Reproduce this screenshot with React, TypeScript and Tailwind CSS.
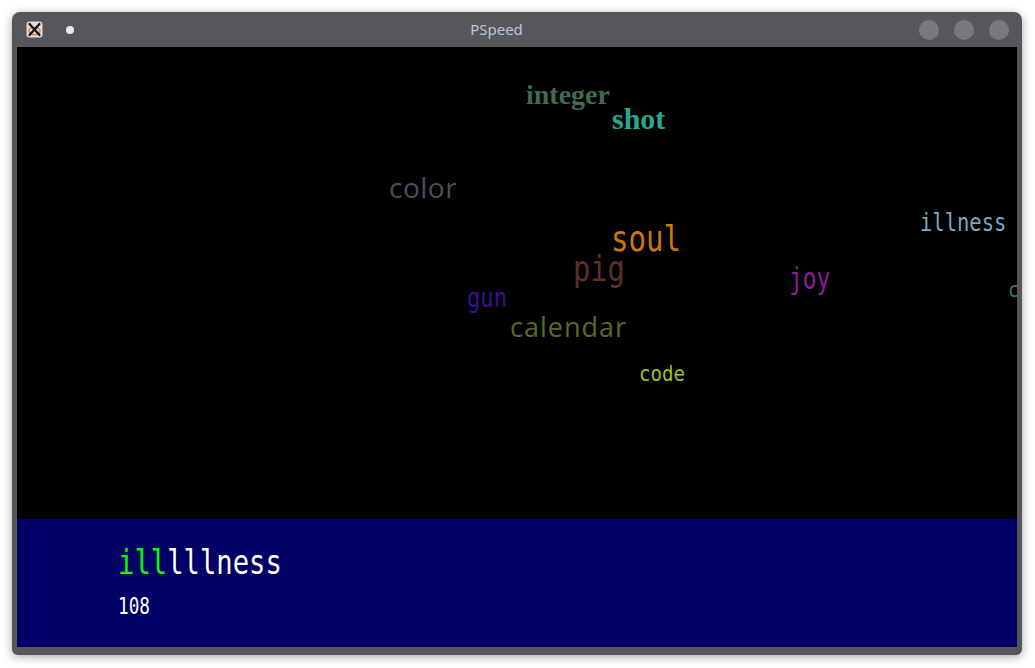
import React from 'react';

type Word = {
  text: string;
  left: number;
  top: number;
  cls: string;
};

// falling words on the play field (position is the content)
const words: Word[] = [
  { text: 'integer', left: 509, top: 34, cls: "font-['Liberation_Serif',serif] font-bold text-[28px] text-[#3f6c50]" },
  { text: 'shot', left: 595, top: 57, cls: "font-['Liberation_Serif',serif] font-bold text-[30px] text-[#28a98d]" },
  { text: 'color', left: 372, top: 126, cls: "font-['Open_Sans',sans-serif] text-[28px] tracking-[0.5px] text-[#594661]" },
  { text: 'soul', left: 594, top: 175, cls: "font-['DejaVu_Sans_Mono',monospace] text-[35px] scale-x-[0.83] text-[#c97a0c]" },
  { text: 'pig', left: 556, top: 205, cls: "font-['DejaVu_Sans_Mono',monospace] text-[35px] scale-x-[0.82] text-[#5c3129]" },
  { text: 'gun', left: 450, top: 237, cls: "font-['DejaVu_Sans_Mono',monospace] text-[27px] scale-x-[0.82] text-[#3b0f92]" },
  { text: 'calendar', left: 493, top: 266, cls: "font-['Open_Sans',sans-serif] text-[27px] tracking-[1px] text-[#5b6a22]" },
  { text: 'code', left: 622, top: 316, cls: "font-['DejaVu_Sans_Mono',monospace] text-[22px] scale-x-[0.87] text-[#9cc21f]" },
  { text: 'illness', left: 903, top: 163, cls: "font-['DejaVu_Sans_Mono',monospace] text-[25px] scale-x-[0.82] text-[#78a9c2]" },
  { text: 'joy', left: 772, top: 217, cls: "font-['DejaVu_Sans_Mono',monospace] text-[30px] scale-x-[0.76] text-[#8c1c9c]" },
  { text: 'c', left: 991, top: 232, cls: "font-['DejaVu_Sans_Mono',monospace] text-[22px] scale-x-[0.85] text-[#3c7a4c]" },
];

function XIcon() {
  return (
    <svg width="17" height="17" viewBox="0 0 17 17">
      <rect x="0.5" y="0.5" width="16" height="16" rx="3" fill="#dedede" />
      <ellipse cx="8.5" cy="10" rx="5.5" ry="3.6" fill="none" stroke="#f07020" strokeWidth="1.4" />
      <path d="M3.5 3 L13.5 14 M13.5 3 L3.5 14" stroke="#111" strokeWidth="2.2" strokeLinecap="round" />
    </svg>
  );
}

export default function App() {
  return (
    <div className="w-[1035px] h-[668px] bg-white pt-[12px] pl-[12px] overflow-hidden">
      <div className="w-[1010px] h-[643px] bg-[#57565c] rounded-t-[8px] rounded-b-[6px] flex flex-col shadow-[0_2px_10px_rgba(0,0,0,0.35)]">
        {/* title bar */}
        <div className="h-[35px] flex items-center pl-[14px] pr-[13px] font-['Noto_Sans',sans-serif]">
          <div className="flex items-center gap-[23px]">
            <XIcon />
            <div className="w-[8px] h-[8px] rounded-full bg-[#ebebeb]" />
          </div>
          <div className="flex-1 text-center text-[15px] text-[#b6c7d9]">PSpeed</div>
          <div className="flex items-center gap-[15px]">
            <div className="w-[20px] h-[20px] rounded-full bg-[#7a7a7e]" />
            <div className="w-[20px] h-[20px] rounded-full bg-[#7a7a7e]" />
            <div className="w-[20px] h-[20px] rounded-full bg-[#7a7a7e]" />
          </div>
        </div>

        <div className="mx-[5px] flex flex-col">
          {/* play field */}
          <div className="h-[472px] bg-black relative overflow-hidden">
            {words.map((w) => (
              <span
                key={w.text}
                className={`absolute inline-block leading-none whitespace-nowrap origin-left ${w.cls}`}
                style={{ left: w.left, top: w.top }}
              >
                {w.text}
              </span>
            ))}
          </div>

          {/* input panel */}
          <div className="h-[128px] bg-[#000066] pl-[101px] pt-[26px] font-['DejaVu_Sans_Mono',monospace] flex flex-col items-start">
            <div className="text-[34px] leading-none scale-x-[0.8] origin-left whitespace-nowrap">
              <span className="text-[#00ff00]">ill</span>
              <span className="text-white">lllness</span>
            </div>
            <div className="mt-[16px] text-[23px] leading-none scale-x-[0.77] origin-left text-white">108</div>
          </div>
        </div>
      </div>
    </div>
  );
}
